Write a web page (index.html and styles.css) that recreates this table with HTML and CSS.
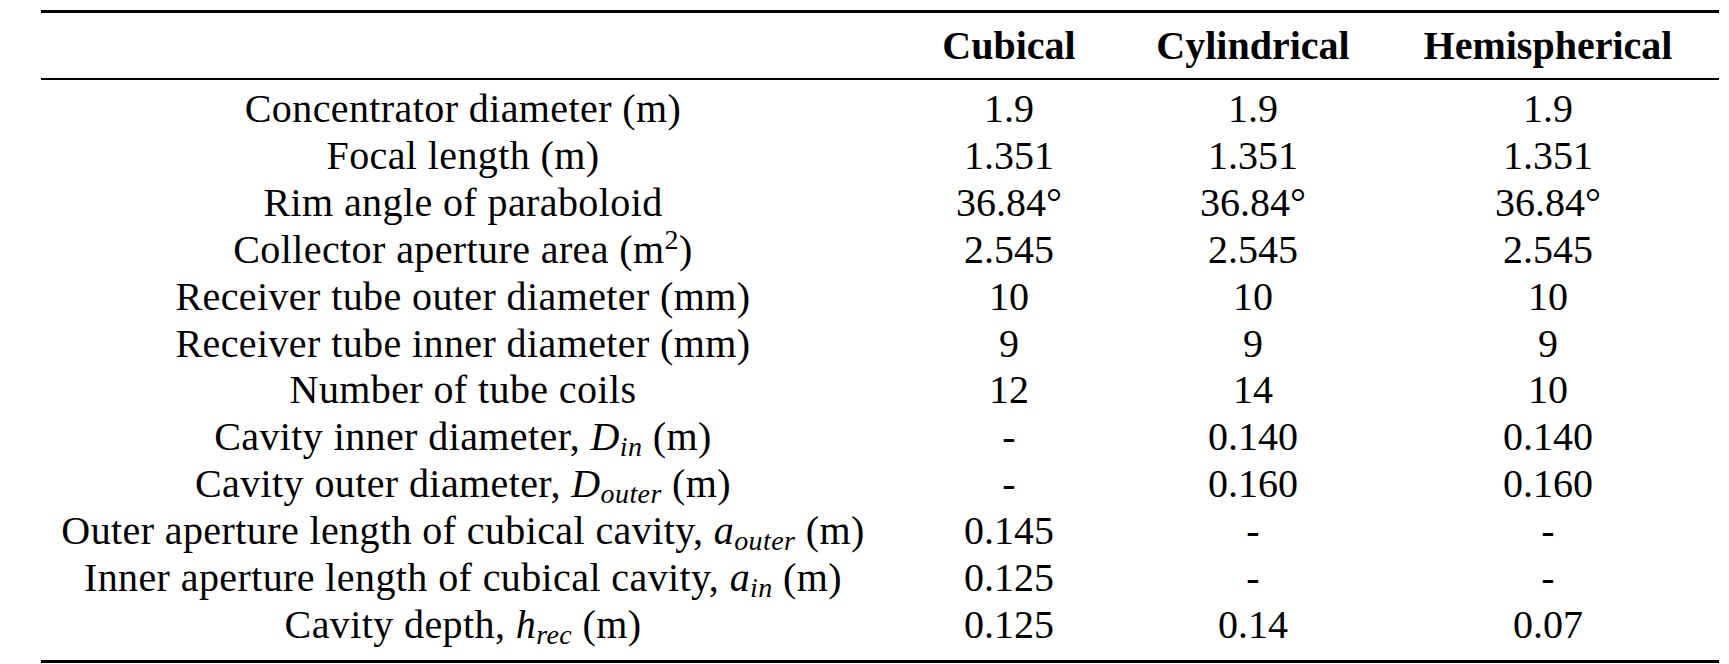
FILE: index.html
```html
<!DOCTYPE html>
<html lang="en">
<head>
<meta charset="utf-8">
<title>Receiver parameters</title>
<link rel="stylesheet" href="styles.css">
</head>
<body>
<div class="sheet">
  <table class="params">
    <colgroup>
      <col class="c-label">
      <col class="c-cub">
      <col class="c-cyl">
      <col class="c-hem">
    </colgroup>
    <thead>
      <tr>
        <th></th>
        <th>Cubical</th>
        <th>Cylindrical</th>
        <th class="hem">Hemispherical</th>
      </tr>
    </thead>
    <tbody>
      <tr><td class="label">Concentrator diameter (m)</td><td>1.9</td><td>1.9</td><td class="hem">1.9</td></tr>
      <tr><td class="label">Focal length (m)</td><td>1.351</td><td>1.351</td><td class="hem">1.351</td></tr>
      <tr><td class="label">Rim angle of paraboloid</td><td>36.84°</td><td>36.84°</td><td class="hem">36.84°</td></tr>
      <tr><td class="label">Collector aperture area (m<sup>2</sup>)</td><td>2.545</td><td>2.545</td><td class="hem">2.545</td></tr>
      <tr><td class="label">Receiver tube outer diameter (mm)</td><td>10</td><td>10</td><td class="hem">10</td></tr>
      <tr><td class="label">Receiver tube inner diameter (mm)</td><td>9</td><td>9</td><td class="hem">9</td></tr>
      <tr><td class="label">Number of tube coils</td><td>12</td><td>14</td><td class="hem">10</td></tr>
      <tr><td class="label">Cavity inner diameter, <i>D<sub>in</sub></i> (m)</td><td>-</td><td>0.140</td><td class="hem">0.140</td></tr>
      <tr><td class="label">Cavity outer diameter, <i>D<sub>outer</sub></i> (m)</td><td>-</td><td>0.160</td><td class="hem">0.160</td></tr>
      <tr><td class="label">Outer aperture length of cubical cavity, <i>a<sub>outer</sub></i> (m)</td><td>0.145</td><td>-</td><td class="hem">-</td></tr>
      <tr><td class="label">Inner aperture length of cubical cavity, <i>a<sub>in</sub></i> (m)</td><td>0.125</td><td>-</td><td class="hem">-</td></tr>
      <tr><td class="label">Cavity depth, <i>h<sub>rec</sub></i> (m)</td><td>0.125</td><td>0.14</td><td class="hem">0.07</td></tr>
    </tbody>
  </table>
</div>
</body>
</html>
```

FILE: styles.css
```css
html, body {
  margin: 0;
  padding: 0;
  background: #ffffff;
}

body {
  font-family: "Liberation Serif", "Times New Roman", serif;
  font-size: 40px;
  color: #000000;
}

.sheet {
  padding: 10px 0 0 41px;
}

.params {
  width: 1678px;
  table-layout: fixed;
  border-collapse: separate;
  border-spacing: 0;
  border-top: 3px solid #000;
  border-bottom: 3px solid #000;
}

.c-label { width: 844px; }
.c-cub { width: 248px; }
.c-cyl { width: 240px; }
.c-hem { width: 346px; }

.params th,
.params td {
  padding: 0;
  text-align: center;
  white-space: nowrap;
  vertical-align: baseline;
}

.params th {
  font-weight: bold;
  line-height: 46px;
  padding-top: 10px;
  padding-bottom: 9px;
  border-bottom: 2px solid #000;
}

.params td {
  line-height: 46.9px;
}

.params td.label {
  letter-spacing: 0.4px;
}

.params .hem {
  padding-left: 4px;
}

.params tbody tr:first-child td {
  padding-top: 6px;
}

.params tbody tr:last-child td {
  padding-bottom: 11px;
}

.params i {
  font-style: italic;
}

.params sub {
  font-size: 0.7em;
  line-height: 0;
  vertical-align: -0.2em;
}

.params sup {
  font-size: 0.7em;
  line-height: 0;
  vertical-align: 0.5em;
}
```
